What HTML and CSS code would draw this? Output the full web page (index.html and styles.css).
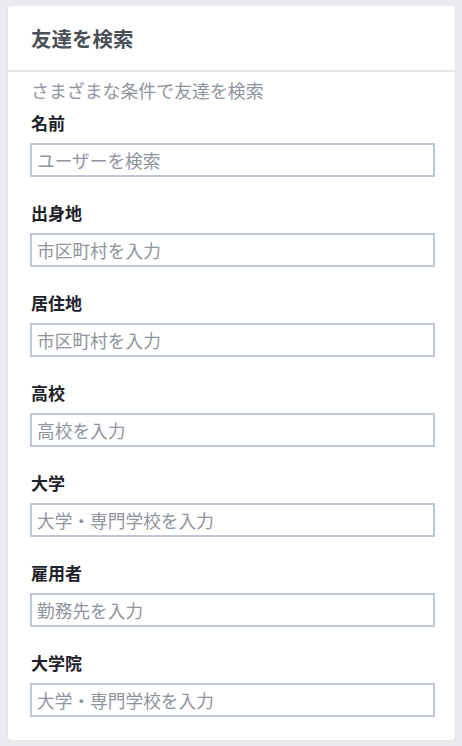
FILE: index.html
```html
<!DOCTYPE html>
<html lang="ja">
<head>
<meta charset="utf-8">
<link rel="stylesheet" href="styles.css">
</head>
<body>
<div class="card">
  <div class="card-header"><h2 class="title">友達を検索</h2></div>
  <div class="card-body">
    <p class="subtitle">さまざまな条件で友達を検索</p>
    <div class="field"><label class="label">名前</label><input class="input" type="text" placeholder="ユーザーを検索"></div>
    <div class="field"><label class="label">出身地</label><input class="input" type="text" placeholder="市区町村を入力"></div>
    <div class="field"><label class="label">居住地</label><input class="input" type="text" placeholder="市区町村を入力"></div>
    <div class="field"><label class="label">高校</label><input class="input" type="text" placeholder="高校を入力"></div>
    <div class="field"><label class="label">大学</label><input class="input" type="text" placeholder="大学・専門学校を入力"></div>
    <div class="field"><label class="label">雇用者</label><input class="input" type="text" placeholder="勤務先を入力"></div>
    <div class="field"><label class="label">大学院</label><input class="input" type="text" placeholder="大学・専門学校を入力"></div>
  </div>
</div>
</body>
</html>
```
FILE: styles.css
```css
* { box-sizing: border-box; }
html, body { margin: 0; padding: 0; }
body {
  background: #e9ebee;
  padding: 6px 7px 0 8px;
  font-family: "Noto Sans CJK JP", "Noto Sans", sans-serif;
}
.card {
  width: 447px;
  background: #fff;
  border-radius: 3px;
  box-shadow: 0 1px 2px rgba(0, 0, 0, 0.12);
}
.card-header {
  height: 66px;
  border-bottom: 2px solid #e5e6e9;
  display: flex;
  align-items: center;
  padding: 0 23px;
}
.title {
  margin: 0;
  font-size: 20.5px;
  line-height: 24px;
  font-weight: bold;
  color: #4b4f56;
}
.card-body {
  padding: 8px 20px 23px 22px;
  display: flex;
  flex-direction: column;
  gap: 26px;
}
.subtitle {
  margin: 0 0 -13px 1px;
  font-size: 17.9px;
  line-height: 20px;
  color: #90949c;
}
.field {
  display: flex;
  flex-direction: column;
  gap: 10px;
}
.label {
  margin-left: 1px;
  font-size: 17px;
  line-height: 20px;
  font-weight: bold;
  color: #1d2129;
}
.input {
  width: 405px;
  height: 34px;
  border: 2px solid #bfc7d7;
  border-radius: 0;
  padding: 0 5px;
  font-family: inherit;
  font-size: 17.7px;
  color: #1d2129;
  outline: none;
  background: #fff;
}
.input::placeholder { color: #90949c; opacity: 1; }
```
